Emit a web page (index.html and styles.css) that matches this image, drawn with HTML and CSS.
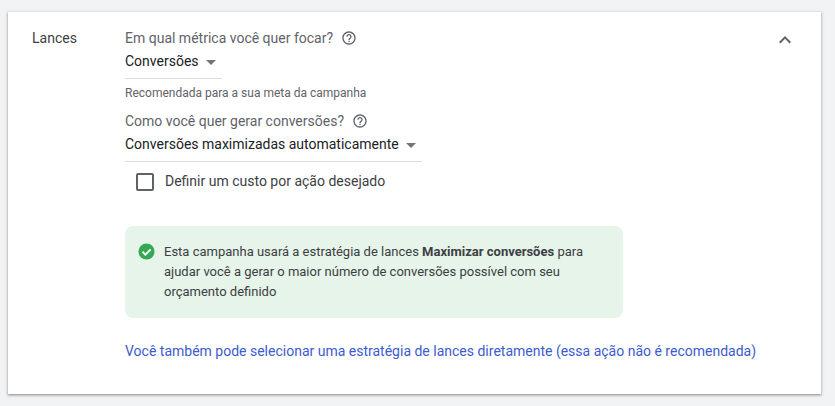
FILE: index.html
```html
<!DOCTYPE html>
<html lang="pt-BR">
<head>
<meta charset="utf-8">
<title>Lances</title>
<link rel="stylesheet" href="styles.css">
</head>
<body>
<section class="card">
  <h2 class="section-title">Lances</h2>
  <div class="content">
    <div class="question">
      <span>Em qual métrica você quer focar?</span>
      <svg class="help" viewBox="0 0 24 24"><path d="M11 18h2v-2h-2v2zm1-16C6.48 2 2 6.48 2 12s4.48 10 10 10 10-4.48 10-10S17.52 2 12 2zm0 18c-4.41 0-8-3.59-8-8s3.59-8 8-8 8 3.59 8 8-3.59 8-8 8zm0-14c-2.21 0-4 1.79-4 4h2c0-1.1.9-2 2-2s2 .9 2 2c0 2-3 1.75-3 5h2c0-2.25 3-2.5 3-5 0-2.21-1.79-4-4-4z"/></svg>
    </div>
    <div class="select select-short">
      <span>Conversões</span><i class="caret"></i>
    </div>
    <p class="hint">Recomendada para a sua meta da campanha</p>
    <div class="question q-second">
      <span>Como você quer gerar conversões?</span>
      <svg class="help" viewBox="0 0 24 24"><path d="M11 18h2v-2h-2v2zm1-16C6.48 2 2 6.48 2 12s4.48 10 10 10 10-4.48 10-10S17.52 2 12 2zm0 18c-4.41 0-8-3.59-8-8s3.59-8 8-8 8 3.59 8 8-3.59 8-8 8zm0-14c-2.21 0-4 1.79-4 4h2c0-1.1.9-2 2-2s2 .9 2 2c0 2-3 1.75-3 5h2c0-2.25 3-2.5 3-5 0-2.21-1.79-4-4-4z"/></svg>
    </div>
    <div class="select select-long">
      <span>Conversões maximizadas automaticamente</span><i class="caret"></i>
    </div>
    <label class="check-row">
      <i class="checkbox"></i>
      <span class="check-label">Definir um custo por ação desejado</span>
    </label>
    <div class="notice">
      <svg class="ok" viewBox="0 0 18 18"><circle cx="9" cy="9" r="8.5" fill="#34a853"/><path d="M4.8 9.3l3 3 5.6-5.6" fill="none" stroke="#fff" stroke-width="2"/></svg>
      <p>Esta campanha usará a estratégia de lances <b>Maximizar conversões</b> para ajudar você a gerar o maior número de conversões possível com seu orçamento definido</p>
    </div>
    <a class="link" href="#">Você também pode selecionar uma estratégia de lances diretamente (essa ação não é recomendada)</a>
  </div>
  <svg class="chevron" viewBox="0 0 24 24"><path d="M12 8l-6 6 1.41 1.41L12 10.83l4.59 4.58L18 14z"/></svg>
</section>
</body>
</html>
```
FILE: styles.css
```css
html, body {
  margin: 0;
  padding: 0;
  height: 406px;
  overflow: hidden;
  background: #f1f3f4;
}
body {
  padding: 12px 14px 0 8px;
  box-sizing: border-box;
  font-family: Roboto, "Liberation Sans", sans-serif;
  font-size: 14px;
  color: #202124;
}
.card {
  display: flex;
  height: 382px;
  box-sizing: border-box;
  padding: 17px 24px 0 24px;
  background: #fff;
  box-shadow: 0 1px 2px rgba(60, 64, 67, .45), 0 1px 3px 1px rgba(60, 64, 67, .15);
}
.section-title {
  width: 93px;
  margin: 0;
  flex: none;
  font-size: 14px;
  font-weight: 400;
  line-height: 18px;
  color: #3c4043;
}
.content {
  flex: 1;
  min-width: 0;
}
.question {
  display: flex;
  align-items: center;
  height: 18px;
  color: #5f6368;
  line-height: 18px;
}
.help {
  width: 16px;
  height: 16px;
  margin-left: 8px;
  fill: #5f6368;
}
.q-second {
  margin-top: 11px;
}
.select {
  display: flex;
  align-items: flex-start;
  box-sizing: border-box;
  height: 32px;
  padding-top: 5px;
  border-bottom: 1px solid #dadce0;
  color: #202124;
  line-height: 18px;
}
.select-short { width: 97px; }
.select-long { width: 297px; }
.caret {
  width: 0;
  height: 0;
  margin: 8px 0 0 7px;
  border-left: 5px solid transparent;
  border-right: 5px solid transparent;
  border-top: 5px solid #757575;
}
.hint {
  margin: 6px 0 0;
  font-size: 12px;
  line-height: 16px;
  color: #5f6368;
}
.check-row {
  display: flex;
  align-items: flex-start;
  height: 18px;
  margin: 11px 0 0 11px;
  color: #3c4043;
}
.check-label {
  line-height: 16px;
}
.checkbox {
  box-sizing: border-box;
  width: 18px;
  height: 18px;
  margin-right: 11px;
  border: 2px solid #5f6368;
  border-radius: 2px;
}
.notice {
  display: flex;
  box-sizing: border-box;
  width: 498px;
  height: 92px;
  margin-top: 35px;
  padding: 16px 20px 0 13px;
  background: #e6f4ea;
  border-radius: 8px;
  color: #3c4043;
}
.ok {
  flex: none;
  width: 17px;
  height: 17px;
  margin: 1px 9px 0 0;
}
.notice p {
  margin: 0;
  font-size: 13px;
  line-height: 20px;
}
.notice b {
  font-weight: 700;
}
.link {
  display: block;
  margin-top: 24px;
  line-height: 18px;
  color: #3c5bcf;
  text-decoration: none;
}
.chevron {
  flex: none;
  width: 24px;
  height: 24px;
  margin-top: -1px;
  fill: #5f6368;
}
```
